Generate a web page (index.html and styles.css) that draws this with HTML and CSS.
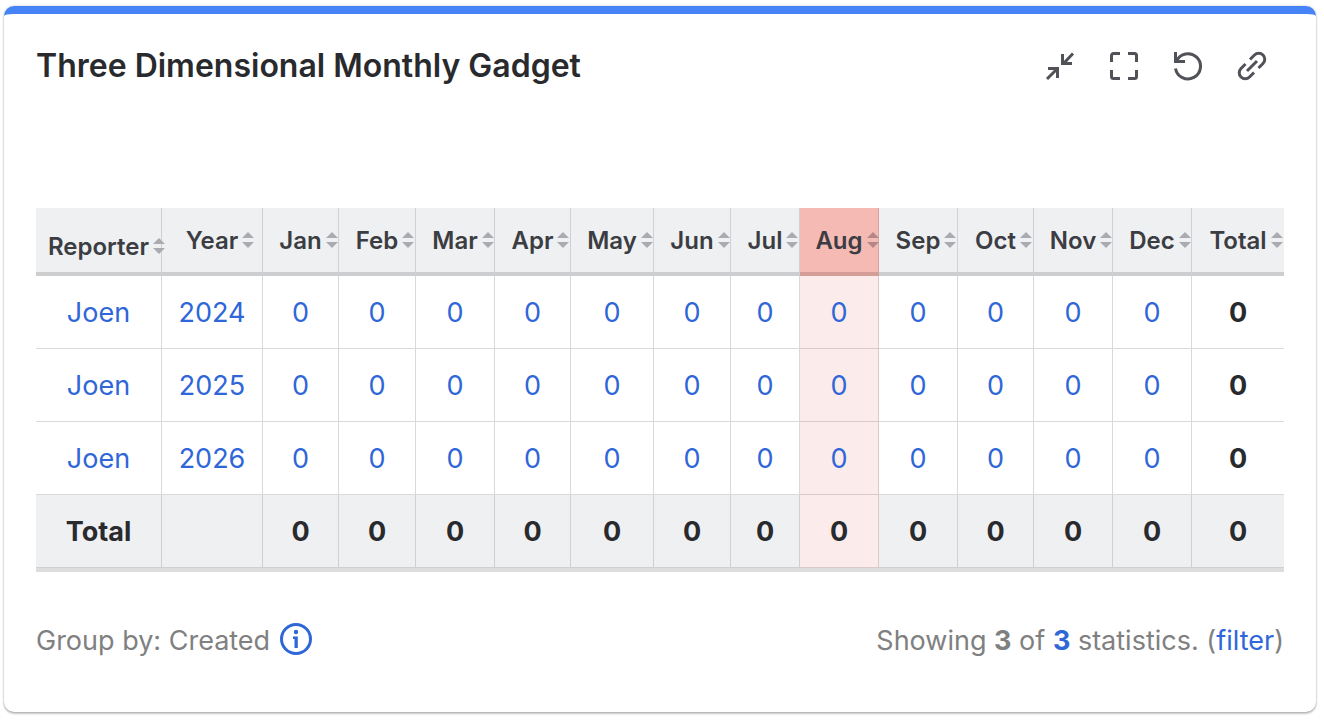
FILE: index.html
```html
<!DOCTYPE html>
<html lang="en">
	<head>
		<meta charset="utf-8">
		<title>Three Dimensional Monthly Gadget</title>
		<link rel="stylesheet" href="styles.css">
	</head>
	<body>
		<div class="gadget">
			<div class="gadget-header">
				<h1 class="gadget-title">Three Dimensional Monthly Gadget</h1>
				<div class="gadget-tools">
					<button type="button" class="tool" aria-label="Minimize">
						<svg viewBox="0 0 32 32"><path d="M29 3.500L19.500 13.500M18.500 4v9.500H28M3 29L12.500 19.500M4 18.500h9.500V28"/></svg>
					</button>
					<button type="button" class="tool" aria-label="Full screen">
						<svg viewBox="0 0 32 32"><path d="M3.500 12V5.500a2 2 0 0 1 2-2H12M20 3.500h6.500a2 2 0 0 1 2 2V12M28.500 20v6.500a2 2 0 0 1-2 2H20M12 28.500H5.500a2 2 0 0 1-2-2V20"/></svg>
					</button>
					<button type="button" class="tool" aria-label="Refresh">
						<svg viewBox="0 0 32 32"><path d="M3.500 2v9.500H13M4.500 11A12.600 12.600 0 1 1 3.500 18.500"/></svg>
					</button>
					<button type="button" class="tool" aria-label="Copy link">
						<svg viewBox="0 0 32 32"><path d="M11 21L21 11M14 9.500l4.500-4.500a6 6 0 0 1 8.500 8.500L22.500 18M9.500 14L5 18.500a6 6 0 0 0 8.500 8.500L18 22.500"/></svg>
					</button>
				</div>
			</div>

			<table class="stats">
				<colgroup>
					<col class="col-reporter"><col class="col-year">
					<col class="col-s"><col class="col-m"><col class="col-l"><col class="col-s">
					<col class="col-may"><col class="col-m"><col class="col-jul"><col class="col-l">
					<col class="col-l"><col class="col-s"><col class="col-l"><col class="col-l">
					<col class="col-total">
				</colgroup>
				<thead>
					<tr>
						<th class="reporter"><button type="button" class="sort">Reporter</button></th>
						<th><button type="button" class="sort">Year</button></th>
						<th><button type="button" class="sort">Jan</button></th>
						<th><button type="button" class="sort">Feb</button></th>
						<th><button type="button" class="sort">Mar</button></th>
						<th><button type="button" class="sort">Apr</button></th>
						<th><button type="button" class="sort">May</button></th>
						<th><button type="button" class="sort">Jun</button></th>
						<th><button type="button" class="sort">Jul</button></th>
						<th class="current"><button type="button" class="sort">Aug</button></th>
						<th><button type="button" class="sort">Sep</button></th>
						<th><button type="button" class="sort">Oct</button></th>
						<th><button type="button" class="sort">Nov</button></th>
						<th><button type="button" class="sort">Dec</button></th>
						<th><button type="button" class="sort">Total</button></th>
					</tr>
				</thead>
				<tbody>
					<tr>
						<td><a href="#">Joen</a></td>
						<td><a href="#">2024</a></td>
						<td><a href="#">0</a></td>
						<td><a href="#">0</a></td>
						<td><a href="#">0</a></td>
						<td><a href="#">0</a></td>
						<td><a href="#">0</a></td>
						<td><a href="#">0</a></td>
						<td><a href="#">0</a></td>
						<td class="current"><a href="#">0</a></td>
						<td><a href="#">0</a></td>
						<td><a href="#">0</a></td>
						<td><a href="#">0</a></td>
						<td><a href="#">0</a></td>
						<td class="sum">0</td>
					</tr>
					<tr>
						<td><a href="#">Joen</a></td>
						<td><a href="#">2025</a></td>
						<td><a href="#">0</a></td>
						<td><a href="#">0</a></td>
						<td><a href="#">0</a></td>
						<td><a href="#">0</a></td>
						<td><a href="#">0</a></td>
						<td><a href="#">0</a></td>
						<td><a href="#">0</a></td>
						<td class="current"><a href="#">0</a></td>
						<td><a href="#">0</a></td>
						<td><a href="#">0</a></td>
						<td><a href="#">0</a></td>
						<td><a href="#">0</a></td>
						<td class="sum">0</td>
					</tr>
					<tr>
						<td><a href="#">Joen</a></td>
						<td><a href="#">2026</a></td>
						<td><a href="#">0</a></td>
						<td><a href="#">0</a></td>
						<td><a href="#">0</a></td>
						<td><a href="#">0</a></td>
						<td><a href="#">0</a></td>
						<td><a href="#">0</a></td>
						<td><a href="#">0</a></td>
						<td class="current"><a href="#">0</a></td>
						<td><a href="#">0</a></td>
						<td><a href="#">0</a></td>
						<td><a href="#">0</a></td>
						<td><a href="#">0</a></td>
						<td class="sum">0</td>
					</tr>
				</tbody>
				<tfoot>
					<tr>
						<td>Total</td>
						<td></td>
						<td>0</td>
						<td>0</td>
						<td>0</td>
						<td>0</td>
						<td>0</td>
						<td>0</td>
						<td>0</td>
						<td class="current">0</td>
						<td>0</td>
						<td>0</td>
						<td>0</td>
						<td>0</td>
						<td>0</td>
					</tr>
				</tfoot>
			</table>

			<div class="gadget-footer">
				<div class="group-by">
					<span>Group by: Created</span>
					<button type="button" class="info" aria-label="Info">
						<svg viewBox="0 0 32 32"><circle class="ring" cx="16" cy="16" r="14.500"/><circle cx="16" cy="9" r="2.200"/><path d="M13 13.500h4.800V25h-3.300v-9H13z"/></svg>
					</button>
				</div>
				<div>Showing <b>3</b> of <a href="#"><b>3</b></a> statistics. (<a href="#">filter</a>)</div>
			</div>
		</div>
	</body>
</html>
```
FILE: styles.css
```css
*{
	margin: 0;
	padding: 0;
	box-sizing: border-box;
}
body{
	padding: 6px 8px 8px 4px;
	background: #fff;
	color: #292a2e;
	font-family: Inter, "Liberation Sans", sans-serif;
	font-size: 27px;
	line-height: 32px;
}
a{
	color: #2f66d8;
	text-decoration: none;
}
button{
	border: 0;
	background: none;
	color: inherit;
	font: inherit;
	cursor: pointer;
}
svg{
	display: block;
	width: 32px;
	height: 32px;
}
.gadget{
	padding: 0 32px 53px;
	border-top: 8px solid #4583f7;
	border-radius: 10px;
	box-shadow: 0 0 2px rgba(0,0,0,.3), 0 2px 2px rgba(0,0,0,.22);
}
.gadget-header{
	display: flex;
	justify-content: space-between;
	align-items: center;
	height: 104px;
	margin-bottom: 90px;
}
.gadget-title{
	font-size: 32px;
	font-weight: 600;
}
.gadget-tools{
	display: flex;
	gap: 32px;
	padding-right: 16px;
}
.tool svg{
	fill: none;
	stroke: #505258;
	stroke-width: 3;
}
/* 表格 */
.stats{
	width: 100%;
	table-layout: fixed;
	border-collapse: separate;
	border-spacing: 0;
	border-bottom: 4px solid #ddd;
	text-align: center;
}
.col-reporter{ width: 126px; }
.col-year{ width: 101px; }
.col-s{ width: 76px; }
.col-m{ width: 77px; }
.col-l{ width: 79px; }
.col-may{ width: 83px; }
.col-jul{ width: 69px; }
.col-total{ width: 92px; }
.stats th{
	height: 68px;
	padding-top: 2px;
	border-right: 1px solid #cfd0d2;
	border-bottom: 4px solid #cdced0;
	background: #eff0f2;
	color: #3b3d42;
	font-size: 24px;
	font-weight: 600;
	white-space: nowrap;
}
.stats td{
	height: 73px;
	padding-top: 2px;
	border-right: 1px solid #d9d9d9;
	border-bottom: 1px solid #d9d9d9;
}
.stats th:last-child,
.stats td:last-child{
	border-right: 0;
}
.stats th.reporter{
	padding-top: 14px;
}
.stats tfoot td{
	border-color: #cfd0d2;
	background: #eff0f2;
	font-weight: 700;
}
.stats .sum{
	font-weight: 700;
}
.stats td.current,
.stats tfoot td.current{
	border-color: #dcc8c8;
	background: #fcebeb;
}
.stats th.current{
	border-right-color: #d3a5a1;
	border-bottom-color: #d49d98;
	background: #f6bab5;
}
/* 排序箭头 */
.sort{
	position: relative;
}
.sort::before,
.sort::after{
	content: "";
	position: absolute;
	left: 100%;
	margin-left: 4px;
	border: 6px solid transparent;
}
.sort::before{
	top: 1px;
	border-bottom-color: #a9abb0;
}
.sort::after{
	bottom: 3px;
	border-top-color: #a9abb0;
}
.current .sort::before{
	border-bottom-color: #b38783;
}
.current .sort::after{
	border-top-color: #b38783;
}
.gadget-footer{
	display: flex;
	justify-content: space-between;
	align-items: center;
	margin-top: 51px;
	color: #808080;
}
.group-by{
	display: flex;
	align-items: center;
	gap: 10px;
}
.info{
	padding-bottom: 4px;
}
.info svg{
	fill: #2f66d8;
}
.info .ring{
	fill: none;
	stroke: #2f66d8;
	stroke-width: 3;
}
```
